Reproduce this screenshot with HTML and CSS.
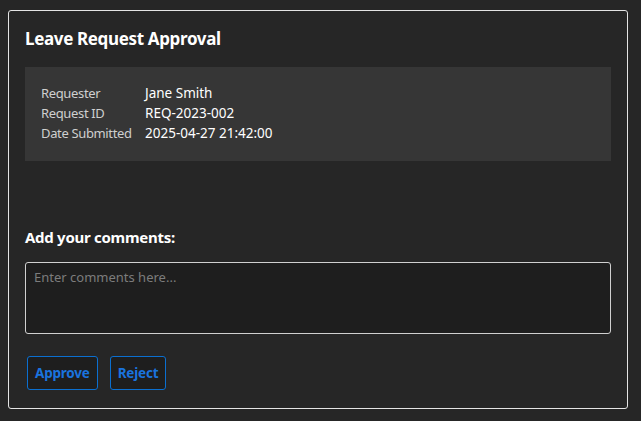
FILE: index.html
```html
<!DOCTYPE html>
<html>
<head>
<meta charset="utf-8">
<link rel="stylesheet" href="styles.css">
</head>
<body>
<div class="card">
  <h2 class="title">Leave Request Approval</h2>
  <div class="info">
    <div class="label">Requester</div><div class="value">Jane Smith</div>
    <div class="label">Request ID</div><div class="value">REQ-2023-002</div>
    <div class="label">Date Submitted</div><div class="value">2025-04-27 21:42:00</div>
  </div>
  <h3 class="comments-title">Add your comments:</h3>
  <textarea class="comments" placeholder="Enter comments here..."></textarea>
  <div class="actions">
    <button class="btn">Approve</button>
    <button class="btn">Reject</button>
  </div>
</div>
</body>
</html>
```
FILE: styles.css
```css
html, body {
  margin: 0;
  background: #262626;
}
body {
  padding: 10px 13px 12px 8px;
  font-family: "Noto Sans", "Open Sans", sans-serif;
  color: #ffffff;
}
.card {
  border: 1px solid #e4e4e4;
  border-radius: 3px;
  background: #262626;
  padding: 16px 16px 18px;
  display: flex;
  flex-direction: column;
}
.title {
  margin: 0;
  font-size: 17px;
  line-height: 24px;
  font-weight: 700;
  letter-spacing: -0.35px;
  color: #ffffff;
}
.info {
  margin-top: 16px;
  background: #363636;
  padding: 16px 16px 18px;
  display: grid;
  grid-template-columns: 104px 1fr;
  row-gap: 0;
  line-height: 20px;
}
.label {
  color: #cfcfcf;
  font-size: 13px;
  letter-spacing: -0.35px;
}
.value {
  color: #ffffff;
  font-size: 13.5px;
}
.comments-title {
  margin: 65px 0 0;
  font-size: 15px;
  line-height: 22px;
  font-weight: 700;
  letter-spacing: -0.28px;
  color: #ffffff;
}
.comments {
  margin-top: 14px;
  height: 72px;
  box-sizing: border-box;
  background: #1e1e1e;
  border: 1px solid #d0d0d0;
  border-radius: 3px;
  padding: 4px 8px;
  font-family: inherit;
  font-size: 13px;
  line-height: 20px;
  color: #ffffff;
  resize: none;
  outline: none;
}
.comments::placeholder {
  color: #7c7c7c;
}
.actions {
  margin-top: 22px;
  margin-left: 2px;
  display: flex;
  gap: 12px;
}
.btn {
  height: 34px;
  padding: 0 7px;
  background: #1e1e1e;
  border: 1px solid #0b6fd0;
  border-radius: 3px;
  color: #1a73de;
  font-family: inherit;
  font-size: 13.5px;
  font-weight: 700;
  letter-spacing: -0.2px;
}
```
